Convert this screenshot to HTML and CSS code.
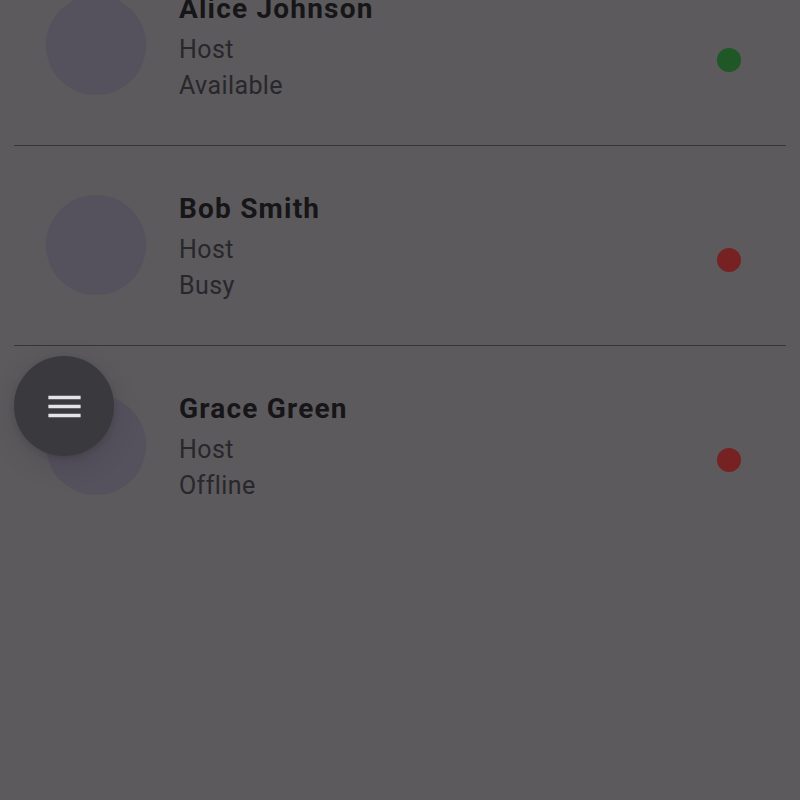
FILE: index.html
```html
<!DOCTYPE html>
<html>
<head>
<meta charset="utf-8">
<link rel="stylesheet" href="styles.css">
</head>
<body>
<div class="list">
  <div class="row">
    <div class="avatar"></div>
    <div class="info">
      <div class="name">Alice Johnson</div>
      <div class="sub first">Host</div>
      <div class="sub">Available</div>
    </div>
    <div class="dot green"></div>
  </div>
  <div class="row">
    <div class="avatar"></div>
    <div class="info">
      <div class="name">Bob Smith</div>
      <div class="sub first">Host</div>
      <div class="sub">Busy</div>
    </div>
    <div class="dot red"></div>
  </div>
  <div class="row">
    <div class="avatar"></div>
    <div class="info">
      <div class="name">Grace Green</div>
      <div class="sub first">Host</div>
      <div class="sub">Offline</div>
    </div>
    <div class="dot red"></div>
  </div>
</div>
<button class="fab" aria-label="Menu">
  <svg width="43" height="43" viewBox="0 0 24 24"><path fill="#e4e3e6" d="M3 6h18v2H3zM3 11h18v2H3zM3 16h18v2H3z"/></svg>
</button>
</body>
</html>
```

FILE: styles.css
```css
html, body {
  margin: 0;
  padding: 0;
  background: #5c5a5d;
  height: 100%;
  overflow: hidden;
  font-family: Roboto, "Noto Sans", sans-serif;
}

.list {
  margin: -54px 14px 0;
}

.row {
  display: flex;
  align-items: flex-start;
  height: 199px;
  border-bottom: 1px solid #363538;
  padding-left: 32px;
}

.row:last-child {
  border-bottom: none;
}

.avatar {
  width: 100px;
  height: 100px;
  border-radius: 50%;
  background: #55515d;
  margin-top: 49px;
  flex: none;
}

.info {
  margin-left: 33px;
  margin-top: 46px;
}

.name {
  font-size: 28px;
  font-weight: 700;
  line-height: 33px;
  color: #161518;
  letter-spacing: 1.2px;
}

.sub {
  font-size: 25px;
  line-height: 36px;
  color: #28272b;
  letter-spacing: 0.4px;
}

.sub.first {
  margin-top: 7px;
}

.dot {
  width: 24px;
  height: 24px;
  border-radius: 50%;
  margin-left: auto;
  margin-right: 45px;
  margin-top: 102px;
  flex: none;
}

.green { background: #1f5727; }
.red { background: #762222; }

.fab {
  position: absolute;
  left: 14px;
  top: 356px;
  width: 100px;
  height: 100px;
  border-radius: 50%;
  border: none;
  padding: 0;
  background: #3a3a3e;
  display: flex;
  align-items: center;
  justify-content: center;
  box-shadow: 0 8px 30px rgba(0, 0, 0, 0.12), 0 2px 6px rgba(0, 0, 0, 0.12);
}

.fab svg {
  display: block;
}
```
